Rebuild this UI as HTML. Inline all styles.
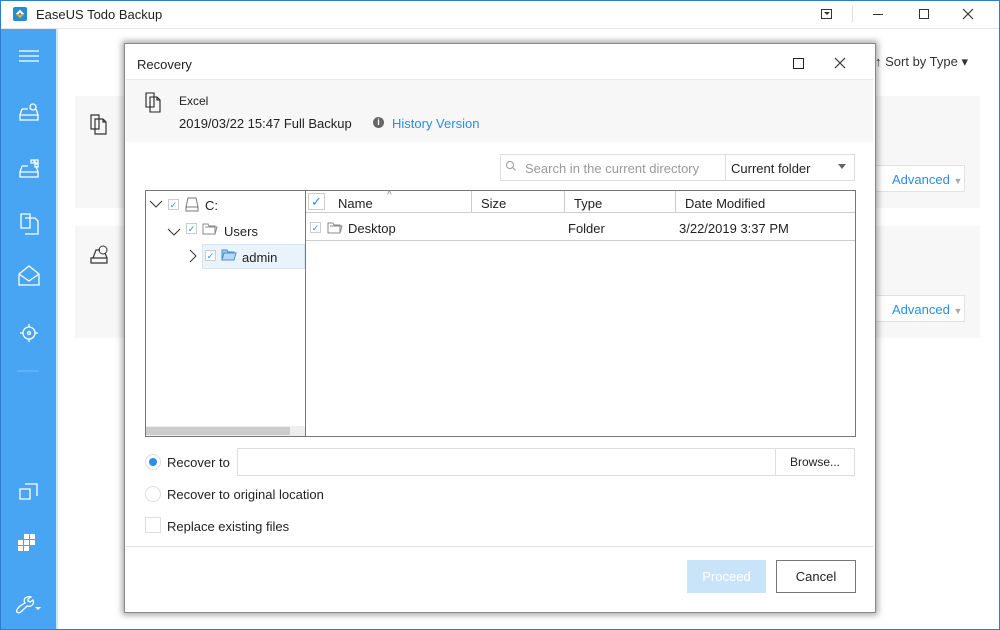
<!DOCTYPE html>
<html><head><meta charset="utf-8"><style>
*{box-sizing:border-box;margin:0;padding:0}
body{width:1000px;height:630px;position:relative;overflow:hidden;background:#fff;font-family:"Liberation Sans",sans-serif;font-size:13px;color:#222}
.a{position:absolute}
.ic{stroke:#fff;fill:none;stroke-width:1.3}
</style></head><body>
<div class="a" style="left:0;top:0;width:1000px;height:630px;border:1px solid #2b7fd0"></div>
<!-- title bar -->
<div class="a" style="left:13px;top:7px;width:14px;height:14px;background:#1f8ed8;border-radius:2px"></div>
<div class="a" style="left:17px;top:11px;width:6px;height:6px;border:2px solid #fff;transform:rotate(45deg);border-color:#fff #f5a623 #f5a623 #fff"></div>
<div class="a" style="left:36px;top:7px;font-size:13px">EaseUS Todo Backup</div>
<div class="a" style="left:821px;top:9px;width:11px;height:10px;border:1px solid #333"></div>
<div class="a" style="left:824px;top:12px;border:3px solid transparent;border-top:3px solid #333"></div>
<div class="a" style="left:852px;top:6px;width:1px;height:16px;background:#ddd"></div>
<div class="a" style="left:873px;top:14px;width:10px;height:1px;background:#333"></div>
<div class="a" style="left:919px;top:9px;width:10px;height:10px;border:1px solid #333"></div>
<svg class="a" style="left:962px;top:8px" width="12" height="12"><path d="M1 1l10 10M11 1L1 11" stroke="#333" stroke-width="1.2"/></svg>
<div class="a" style="left:1px;top:28px;width:998px;height:1px;background:#e6e6e6"></div>
<!-- sidebar -->
<div class="a" style="left:1px;top:29px;width:55px;height:600px;background:#48a5f3"></div>
<div class="a" style="left:56px;top:29px;width:2px;height:600px;background:#cfe5f8"></div>
<svg class="a" style="left:0;top:29px" width="56" height="600">
<g class="ic"><path d="M19 22h20M19 27h20M19 32h20"/>
<path d="M20 86h18v5H20zM22 80l-2 6M36 80l2 6M22 80h6"/><circle cx="33" cy="78" r="3"/>
<path d="M20 143h18v5H20zM22 137l-2 6M36 137l2 6M22 137h6M31 131h3v3h-3zM35 131h3v3h-3zM35 135h3v3h-3z"/>
<path d="M21 185h9v14h-9zM25 189h10l3 3v13h-13"/>
<path d="M19 245l10-8 10 8v11H19zM19 245l10 7 10-7"/>
<circle cx="29" cy="304" r="6"/><circle cx="29" cy="304" r="1.5"/><path d="M29 295v3M29 310v3M20 304h3M35 304h3"/>
<path d="M20 460h10v10H20zM25 455h12v12"/>
<path d="M20 577c-3 3-4 5-3 6 2 2 4 0 7-3l3-3c2 1 5 0 6-2 1-2 0-4 0-4l-3 2-2-1v-2l3-2c-2-1-4 0-6 1-1 2-1 4 0 5z"/></g>
<path d="M17 342h22" stroke="#7cbcf5"/>
<path d="M18 511h5v5h-5zM24 511h5v5h-5zM18 517h5v5h-5zM24 517h5v5h-5zM24 505h5v5h-5zM30 505h5v5h-5zM30 511h5v5h-5z" fill="#fff"/>
<path d="M35 578h6l-3 3z" fill="#fff"/>
</svg>
<!-- background content -->
<div class="a" style="left:875px;top:54px;font-size:13px;color:#333">↑ Sort by Type ▾</div>
<div class="a" style="left:75px;top:96px;width:905px;height:112px;background:#f7f7f7"></div>
<div class="a" style="left:75px;top:226px;width:905px;height:112px;background:#f7f7f7"></div>
<div class="a" style="left:872px;top:165px;width:93px;height:27px;background:#fff;border:1px solid #e2e2e2;color:#2a8de6;padding:6px 0 0 19px">Advanced <span style="color:#aaa;font-size:9px">▼</span></div>
<div class="a" style="left:872px;top:295px;width:93px;height:27px;background:#fff;border:1px solid #e2e2e2;color:#2a8de6;padding:6px 0 0 19px">Advanced <span style="color:#aaa;font-size:9px">▼</span></div>
<svg class="a" style="left:88px;top:112px" width="24" height="24"><path d="M3 3h8v14H3zM7 7h8l3 3v12H7zM15 7v3h3" fill="none" stroke="#333" stroke-width="1.2"/></svg>
<svg class="a" style="left:88px;top:242px" width="24" height="24"><path d="M3 16h16v5H3zM5 16l3-8h4M19 16l-2-5" fill="none" stroke="#333" stroke-width="1.2"/><circle cx="15" cy="8" r="4" fill="none" stroke="#333"/></svg>
<!-- dialog -->
<div class="a" style="left:124px;top:43px;width:752px;height:570px;box-shadow:0 0 6px 2px rgba(0,0,0,.35);background:#fff;border:1px solid #888"></div>
<div class="a" style="left:137px;top:57px">Recovery</div>
<div class="a" style="left:793px;top:58px;width:11px;height:11px;border:1px solid #222"></div>
<svg class="a" style="left:834px;top:57px" width="12" height="12"><path d="M1 1l10 10M11 1L1 11" stroke="#333" stroke-width="1.2"/></svg>
<div class="a" style="left:126px;top:79px;width:747px;height:63px;background:#f7f7f7;border-top:1px solid #e8e8e8"></div>
<svg class="a" style="left:144px;top:91px" width="20" height="22"><path d="M2 2h8v14H2zM6 6h7l3 3v12H6zM13 6v3h3" fill="none" stroke="#222" stroke-width="1.1"/></svg>
<div class="a" style="left:179px;top:94px;font-size:12px">Excel</div>
<div class="a" style="left:179px;top:116px">2019/03/22 15:47 Full Backup</div>
<div class="a" style="left:373px;top:117px;width:11px;height:11px;border-radius:50%;background:#666;color:#fff;font-size:9px;text-align:center;line-height:11px;font-weight:bold">i</div>
<div class="a" style="left:392px;top:116px;color:#2a8de6">History Version</div>
<!-- search -->
<div class="a" style="left:500px;top:154px;width:355px;height:27px;border:1px solid #ddd"></div>
<div class="a" style="left:725px;top:154px;width:1px;height:27px;background:#ddd"></div>
<svg class="a" style="left:505px;top:160px" width="12" height="12"><circle cx="5" cy="5" r="3.5" fill="none" stroke="#999"/><path d="M7.5 7.5l3 3" stroke="#999"/></svg>
<div class="a" style="left:525px;top:161px;color:#999">Search in the current directory</div>
<div class="a" style="left:731px;top:161px">Current folder</div>
<div class="a" style="left:838px;top:164px;border:4px solid transparent;border-top:5px solid #666;border-bottom:0"></div>
<!-- tree/list -->
<div class="a" style="left:145px;top:190px;width:711px;height:247px;border:1px solid #777"></div>
<div class="a" style="left:305px;top:190px;width:1px;height:247px;background:#777"></div>
<div class="a" style="left:146px;top:426px;width:159px;height:10px;background:#eee"></div>
<div class="a" style="left:146px;top:427px;width:144px;height:8px;background:#ccc"></div>
<div class="a" style="left:306px;top:191px;width:549px;height:22px;border-bottom:1px solid #ccc"></div>
<div class="a" style="left:471px;top:191px;width:1px;height:22px;background:#ccc"></div>
<div class="a" style="left:564px;top:191px;width:1px;height:22px;background:#ccc"></div>
<div class="a" style="left:675px;top:191px;width:1px;height:22px;background:#ccc"></div>
<div class="a" style="left:308px;top:193px;width:17px;height:17px;border:1px solid #ccc;color:#2a8de6;font-size:13px;text-align:center;line-height:16px">✓</div>
<div class="a" style="left:338px;top:196px">Name</div>
<div class="a" style="left:387px;top:190px;font-size:10px;color:#888">^</div>
<div class="a" style="left:481px;top:196px">Size</div>
<div class="a" style="left:574px;top:196px">Type</div>
<div class="a" style="left:685px;top:196px">Date Modified</div>
<div class="a" style="left:306px;top:240px;width:549px;height:1px;background:#ccc"></div>
<div class="a" style="left:310px;top:222px;width:11px;height:11px;border:1px solid #ccc;color:#2a8de6;font-size:9px;text-align:center;line-height:10px">✓</div>
<svg class="a" style="left:327px;top:221px" width="16" height="13"><path d="M1 2h5l1 2h6v8H1z M3 5h12l-2 7" fill="none" stroke="#888"/></svg>
<div class="a" style="left:348px;top:221px">Desktop</div>
<div class="a" style="left:568px;top:221px">Folder</div>
<div class="a" style="left:679px;top:221px">3/22/2019 3:37 PM</div>
<!-- tree -->
<div class="a" style="left:202px;top:244px;width:103px;height:25px;background:#e9f3fc;border:1px solid #d2e6f8"></div>
<svg class="a" style="left:146px;top:195px" width="159" height="75"><g fill="none" stroke="#333"><path d="M4 6l6 6 6-6M22 34l6 6 6-6M44 55l6 6-6 6"/></g></svg>
<div class="a" style="left:168px;top:199px;width:11px;height:11px;border:1px solid #ccc;color:#2a8de6;font-size:9px;text-align:center;line-height:10px">✓</div>
<div class="a" style="left:186px;top:223px;width:11px;height:11px;border:1px solid #ccc;color:#2a8de6;font-size:9px;text-align:center;line-height:10px">✓</div>
<div class="a" style="left:205px;top:250px;width:11px;height:11px;border:1px solid #ccc;background:#fff;color:#2a8de6;font-size:9px;text-align:center;line-height:10px">✓</div>
<svg class="a" style="left:184px;top:196px" width="18" height="18"><path d="M4 2h8l2 9H2zM2 11h12v4H2z" fill="none" stroke="#777"/></svg>
<div class="a" style="left:205px;top:198px">C:</div>
<svg class="a" style="left:202px;top:222px" width="17" height="13"><path d="M1 2h5l1 2h6v8H1z M3 5h12l-2 7" fill="none" stroke="#888"/></svg>
<div class="a" style="left:224px;top:224px">Users</div>
<svg class="a" style="left:221px;top:248px" width="17" height="13"><path d="M1 2h5l1 2h6v8H1z" fill="#9cc8ee" stroke="#4a8fd0"/><path d="M3 5h12l-2 7H1z" fill="#b6d8f5" stroke="#4a8fd0"/></svg>
<div class="a" style="left:242px;top:250px">admin</div>
<!-- options -->
<div class="a" style="left:145px;top:454px;width:16px;height:16px;border-radius:50%;border:1px solid #ddd;background:#fff"></div>
<div class="a" style="left:149px;top:458px;width:8px;height:8px;border-radius:50%;background:#2a8de6"></div>
<div class="a" style="left:167px;top:455px">Recover to</div>
<div class="a" style="left:237px;top:448px;width:618px;height:28px;border:1px solid #ddd"></div>
<div class="a" style="left:775px;top:448px;width:1px;height:28px;background:#ddd"></div>
<div class="a" style="left:790px;top:455px;font-size:12px">Browse...</div>
<div class="a" style="left:145px;top:486px;width:16px;height:16px;border-radius:50%;border:1px solid #ddd"></div>
<div class="a" style="left:167px;top:487px">Recover to original location</div>
<div class="a" style="left:145px;top:517px;width:16px;height:16px;border:1px solid #ddd"></div>
<div class="a" style="left:167px;top:519px">Replace existing files</div>
<div class="a" style="left:126px;top:546px;width:747px;height:1px;background:#e0e0e0"></div>
<div class="a" style="left:687px;top:560px;width:79px;height:33px;background:#c9e4f9;color:#fff;text-align:center;line-height:33px">Proceed</div>
<div class="a" style="left:776px;top:560px;width:80px;height:33px;border:1px solid #777;text-align:center;line-height:31px">Cancel</div>
</body></html>
